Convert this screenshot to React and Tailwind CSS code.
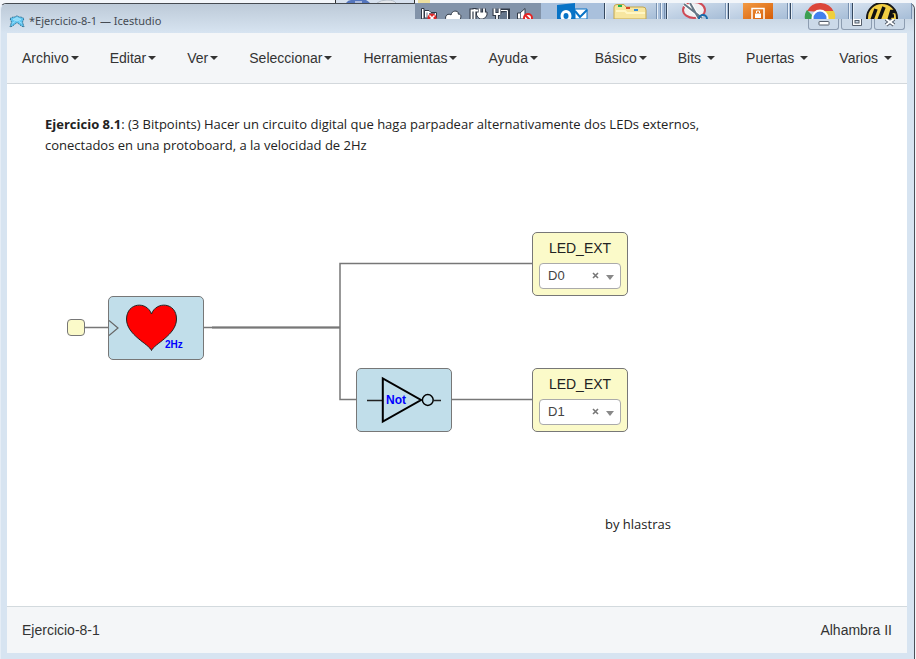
import React from "react";

const fileMenus = ["Archivo", "Editar", "Ver", "Seleccionar", "Herramientas", "Ayuda"];
const blockMenus = ["Básico", "Bits", "Puertas", "Varios"];

function Caret() {
  return (
    <svg className="h-1 w-2" viewBox="0 0 8 4" aria-hidden="true">
      <path d="M0 0H8L4 4Z" fill="#333" />
    </svg>
  );
}

function Menu({ label, wide }) {
  return (
    <li>
      <button type="button" className={wide ? "flex items-center gap-1.5" : "flex items-center gap-0.5"}>
        {label}
        <Caret />
      </button>
    </li>
  );
}

function AppIcon() {
  return (
    <svg className="h-[13px] w-4" viewBox="0 0 16 13" aria-hidden="true">
      <path d="M1 3.500L4 2L6 2L8 .7L10 2L12 2L15 3.500L13.500 7L15 12L12.500 11L8 7.500L3.500 11L1 12L2.500 7Z" fill="#5fc4f0" stroke="#2f6f90" strokeWidth="1" strokeDasharray="1.500 .8" />
      <path d="M4 4.500L8 2.500L12 4.500L8 6ZM3 8.500L6 6.500M13 8.500L10 6.500" fill="#8fdaf8" stroke="#a5e4fb" strokeWidth=".8" />
    </svg>
  );
}

function Taskbar() {
  return (
    <svg className="absolute right-0 top-[3px] h-4 w-[501px]" viewBox="415 3 501 16" aria-hidden="true">
      <defs>
        <linearGradient id="tile" x1="0" y1="0" x2="1" y2="1">
          <stop offset="0" stopColor="#d5e1ef" />
          <stop offset="1" stopColor="#a6bdd7" />
        </linearGradient>
        <linearGradient id="orange" x1="0" y1="0" x2="1" y2="1">
          <stop offset="0" stopColor="#f29a43" />
          <stop offset="1" stopColor="#d65d07" />
        </linearGradient>
      </defs>
      <rect x="415" y="3" width="126" height="16" fill="#8293a9" />
      <rect x="541" y="3" width="370" height="16" fill="#a9c0dc" />
      <g fill="url(#tile)">
        <rect x="606" y="3" width="50" height="16" />
        <rect x="668" y="3" width="57" height="16" />
        <rect x="730" y="3" width="58" height="16" />
        <rect x="793" y="3" width="56" height="16" />
        <rect x="854" y="3" width="57" height="16" />
      </g>
      <path d="M604.500 3V19M666.500 3V19M728.500 3V19M790.500 3V19M852.500 3V19" stroke="#35485f" />
      <path d="M605.500 3V19M667.500 3V19M729.500 3V19M791.500 3V19M853.500 3V19M657.500 3V19M661.500 3V19M726.500 3V19M788.500 3V19M849.500 3V19" stroke="#e8f0f8" />
      <path d="M656.500 3V19M660.500 3V19M664.500 3V19M725.500 3V19M787.500 3V19M848.500 3V19M911.500 3V19" stroke="#7891b0" />
      <g stroke="#303946" strokeWidth="1" fill="#fff">
        <path d="M421.500 8.500H424V19H421.500ZM424.500 10.500H429L431 12.500H436.500V18H424.500Z" />
        <path d="M446 20C444 15 449 13 451 15C452 9 460 11 458 14C462 14 461 17 460 20Z" />
      </g>
      <path d="M427 12.500V18M429 13.500H435" stroke="#65768b" />
      <g fill="none" stroke="#303946" strokeWidth="4">
        <path d="M479 10.500H471.500V19M474.500 8V19M479.500 8.500V13M484 8.500V13" />
        <path d="M494.500 8.500V14H499.500V8.500M497 14V19M501 10.500H508V19" />
      </g>
      <path d="M476.500 12H487V15Q486 18 483 19H480Q477 17 476.500 15Z" fill="#fff" stroke="#303946" />
      <g fill="none" stroke="#fff" strokeWidth="1.800">
        <path d="M478 10.500H471.500V19M474.500 9V19M479.500 8.500V13M484 8.500V13" />
        <path d="M494.500 8.500V14H499.500V8.500M497 14V19" />
        <path d="M501 10.500H507.500V19" strokeWidth="1" />
      </g>
      <path d="M500 15L507 11V19H500Z" fill="#65768b" />
      <path d="M517.500 13H520L525 8.500V19H517.500Z" fill="#fff" stroke="#303946" />
      <path d="M520.500 13V19" stroke="#65768b" />
      <circle cx="432" cy="18" r="4.500" fill="#df2727" />
      <path d="M429.500 15.500L435 21M434.500 15.500L429 21" stroke="#fff" strokeWidth="1.500" />
      <circle cx="528" cy="18" r="4" fill="#fff" stroke="#e42525" strokeWidth="2" />
      <path d="M525 15L531 21" stroke="#e42525" strokeWidth="2" />
      <path d="M557 5L575 3V19H557Z" fill="#0873c6" />
      <ellipse cx="566" cy="16" rx="4" ry="4.500" fill="none" stroke="#fff" strokeWidth="3" />
      <path d="M575 9H587V19H575Z" fill="#fff" stroke="#0873c6" />
      <path d="M575 11L580 17L587 10" fill="none" stroke="#0873c6" strokeWidth="2" />
      <path d="M614 19V7Q614 4.500 617 4.500H624L626 7H643Q646 7 646 10V19Z" fill="#f7e6a0" stroke="#c2a651" />
      <path d="M616 11H625L627 13H645" fill="none" stroke="#fff6c4" strokeWidth="2" />
      <path d="M618 6H622" stroke="#1bb552" strokeWidth="2" />
      <path d="M626 8H630" stroke="#d94824" strokeWidth="2" />
      <path d="M634 10H638" stroke="#338bda" strokeWidth="2" />
      <ellipse cx="694" cy="10" rx="11" ry="8" fill="#eef0f3" stroke="#cf4b57" strokeWidth="2" />
      <path d="M684 4L702 18M690 3L699 19" stroke="#fff" strokeWidth="4" />
      <path d="M684 4L702 18M690 3L699 19" stroke="#667887" strokeWidth="2" />
      <circle cx="703" cy="19" r="4" fill="none" stroke="#166cab" strokeWidth="2" />
      <path d="M743 3H773V19H743Z" fill="url(#orange)" />
      <path d="M752 19V8.500H764V19" fill="none" stroke="#fff" strokeWidth="1.500" />
      <path d="M755 13.500H761V18H755Z" fill="#fff" />
      <path d="M756.500 13V11H759.500V13" fill="none" stroke="#fff" />
      <path d="M807 11A15 15 0 0 1 834 12H820Z" fill="#dc4639" />
      <path d="M807 10L816 19H805Q804 14 807 10Z" fill="#3b9f52" />
      <path d="M822 11H834Q836 15 835 19H824Z" fill="#efcf3d" />
      <circle cx="820" cy="18" r="7.500" fill="#4380ed" stroke="#fff" strokeWidth="2" />
      <circle cx="882" cy="18" r="15" fill="#f2ce43" stroke="#161616" strokeWidth="2" />
      <path d="M876 9L872 20M884 7L879 20M889 20L891.500 11.500H896M889 16H894" fill="none" stroke="#111" strokeWidth="3.500" />
    </svg>
  );
}

function WindowButton({ label, children }) {
  return (
    <button type="button" aria-label={label} className="flex h-[11px] w-[31px] justify-center rounded-b-[3px] border border-t-0 border-[#8d9db1] bg-[#cbd9e8]">
      <svg className="h-[9px] w-3" viewBox="0 0 12 9" aria-hidden="true">{children}</svg>
    </button>
  );
}

function LedNode({ id, pin, className }) {
  return (
    <div className={`absolute flex h-16 w-24 flex-col rounded-[5px] border border-[#777] bg-[#fbfac9] px-1.5 pb-1.5 pt-[5px] ${className}`}>
      <label htmlFor={id} className="text-center text-sm leading-5 text-[#222]">LED_EXT</label>
      <div className="relative mt-[5px]">
        <select id={id} defaultValue={pin} className="block h-[26px] w-full appearance-none rounded border border-[#aaa] bg-white pl-2 text-[13px] leading-6 text-[#444]">
          <option>D0</option>
          <option>D1</option>
        </select>
        <button type="button" aria-label="Quitar" className="absolute right-[22px] top-[9px]">
          <svg className="h-[7px] w-[7px]" viewBox="0 0 7 7" aria-hidden="true">
            <path d="M1 1L6 6M6 1L1 6" stroke="#777" strokeWidth="1.600" />
          </svg>
        </button>
        <svg className="pointer-events-none absolute right-[7px] top-3 h-[5px] w-2" viewBox="0 0 8 5" aria-hidden="true">
          <path d="M0 0H8L4 5Z" fill="#888" />
        </svg>
      </div>
    </div>
  );
}

function Circuit() {
  return (
    <>
      <svg className="absolute left-0 top-0 h-[420px] w-[640px]" viewBox="7 84 640 420" aria-hidden="true">
        <g fill="none" stroke="#777" strokeWidth="1.500">
          <path d="M84 327.500H108M204 327.500H340" />
          <path d="M532 263.500H340V399.500H356M452 399.500H532" />
        </g>
        <path d="M212 327.500H340" stroke="#777" strokeWidth="2" />
        <rect x="67.500" y="319.500" width="17" height="16" rx="3.500" fill="#fbfac9" stroke="#777" />
      </svg>
      <div className="absolute left-[101px] top-[212px] h-16 w-24 rounded-[5px] border border-[#777] bg-[#c1deea]">
        <svg className="h-full w-full" viewBox="109 297 94 62" role="img" aria-label="Corazón 2Hz">
          <path d="M109 320.500L118 328L109 335.500" fill="none" stroke="#666" strokeWidth="1.200" />
          <path d="M151.500 350.500C149 344 126.500 335 126.500 319C127 302 147 301 151.500 314C156 301 176.500 302 176.500 319C176.500 335 154 344 151.500 350.500Z" fill="red" stroke="#222" />
          <text x="165" y="348" fontFamily="Liberation Sans, sans-serif" fontSize="10" fontWeight="700" fill="#00f">2Hz</text>
        </svg>
      </div>
      <div className="absolute left-[349px] top-[284px] h-16 w-24 rounded-[5px] border border-[#777] bg-[#c1deea]">
        <svg className="h-full w-full" viewBox="357 369 94 62" role="img" aria-label="Puerta Not">
          <path d="M367 400.500H382M434 400.500H441" stroke="#222" strokeWidth="1.300" />
          <path d="M382.800 378.500V421.500L421 400Z" fill="none" stroke="#000" strokeWidth="2" />
          <circle cx="427.800" cy="400" r="5.400" fill="none" stroke="#000" strokeWidth="1.500" />
          <text x="386" y="404" fontFamily="Liberation Sans, sans-serif" fontSize="12" fontWeight="700" fill="#00f">Not</text>
        </svg>
      </div>
      <LedNode id="led-a" pin="D0" className="left-[525px] top-[148px]" />
      <LedNode id="led-b" pin="D1" className="left-[525px] top-[284px]" />
    </>
  );
}

export default function App() {
  return (
    <div className="relative flex h-screen flex-col bg-[#f3f6fa] pr-px pt-[3px] font-['Liberation_Sans',Arial,sans-serif] text-sm text-[#333]">
      <svg className="absolute left-[335px] top-0 h-[3px] w-[100px]" viewBox="335 0 100 3" aria-hidden="true">
        <path d="M335 0H415V3H335Z" fill="#d7e1ee" />
        <path d="M346 3Q348 0 351 0H366Q368 1 370 3Z" fill="#5475bd" />
        <path d="M355 2H362" stroke="#fff" />
        <path d="M377 3Q381 0 387 0Q394 0 396 3" fill="#e3e6ea" stroke="#b5bec9" />
        <path d="M335.500 0V3M414.500 0V3" stroke="#333" />
        <path d="M418 0H430V3H418Z" fill="#eee1a0" />
      </svg>
      <div className="flex min-h-0 flex-1 flex-col rounded-t-md border-l border-r border-t border-l-[#e5edf6] border-r-[#4b5058] border-t-[#454a50] bg-[#d7e4f1] pb-1.5 pl-1.5 pr-[7px]">
        <header className="-ml-1.5 -mr-[7px] flex h-[29px] shrink-0 items-start justify-between rounded-t-md bg-linear-to-b from-[#bdcad8] to-[#d7e4f1] pl-2 pr-[9px]">
          <div className="flex items-center gap-1 pt-[9px]">
            <AppIcon />
            <h1 className="font-['Noto_Sans','Open_Sans',sans-serif] text-[11px] leading-4 text-[#454b53]">*Ejercicio-8-1 — Icestudio</h1>
          </div>
          <div className="flex gap-0.5 pt-[15px]">
            <WindowButton label="Minimizar">
              <rect x="1" y="2.500" width="10" height="3.500" rx=".5" fill="#fff" stroke="#555e6b" />
            </WindowButton>
            <WindowButton label="Maximizar">
              <path d="M1.500 0V6.500H10.500V0" fill="#fff" stroke="#555e6b" />
              <rect x="4" y="1.500" width="4" height="2.500" fill="#cbd9e8" stroke="#555e6b" />
            </WindowButton>
            <WindowButton label="Cerrar">
              <path d="M2 0L10 6M10 0L2 6" stroke="#555e6b" strokeWidth="4" />
              <path d="M2 0L10 6M10 0L2 6" stroke="#fff" strokeWidth="2" />
            </WindowButton>
          </div>
        </header>
        <nav className="flex h-[51px] shrink-0 items-center justify-between border-b border-[#d3d8dc] bg-[#f4f6f8] px-[15px]">
          <ul className="flex gap-[31px]">
            {fileMenus.map((m) => <Menu key={m} label={m} />)}
          </ul>
          <ul className="flex gap-[31px]">
            {blockMenus.map((m) => <Menu key={m} label={m} wide={m !== "Básico"} />)}
          </ul>
        </nav>
        <main className="relative min-h-0 flex-1 overflow-hidden bg-white px-[38px] pt-[30px]">
          <p className="font-['Open_Sans','Noto_Sans',sans-serif] text-[13px] leading-[21px] text-[#222]">
            <strong>Ejercicio 8.1</strong>: (3 Bitpoints) Hacer un circuito digital que haga parpadear alternativamente dos LEDs externos,
            <br />
            conectados en una protoboard, a la velocidad de 2Hz
          </p>
          <Circuit />
          <p className="absolute left-[598px] top-[430px] font-['Open_Sans','Noto_Sans',sans-serif] text-[13px] leading-[21px] text-[#222]">by hlastras</p>
        </main>
        <footer className="flex h-[47px] shrink-0 items-center justify-between border-t border-[#d3dade] bg-[#f4f6f8] px-[15px]">
          <span>Ejercicio-8-1</span>
          <span>Alhambra II</span>
        </footer>
      </div>
      <Taskbar />
    </div>
  );
}
